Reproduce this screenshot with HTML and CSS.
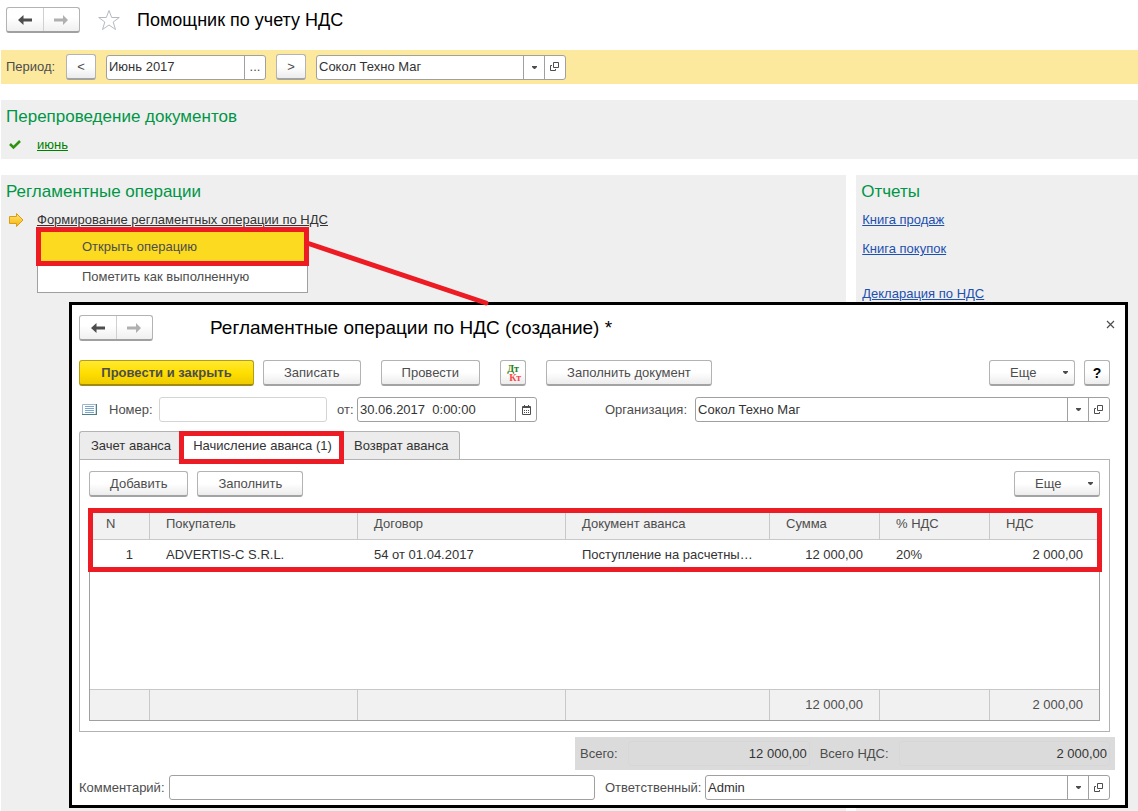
FILE: index.html
```html
<!DOCTYPE html>
<html lang="ru">
<head>
<meta charset="utf-8">
<meta name="viewport" content="width=device-width, initial-scale=1">
<title>Помощник по учету НДС</title>
<link rel="stylesheet" href="styles.css">
</head>
<body>
<svg class="defs" width="0" height="0" aria-hidden="true">
  <defs>
    <symbol id="back" viewBox="0 0 14 10"><path d="M0 5L5.500 0V3.500H14V6.500H5.500V10Z"/></symbol>
    <symbol id="forward" viewBox="0 0 14 10"><path d="M14 5L9 0V3.500H0V6.500H9V10Z"/></symbol>
    <symbol id="arrow" viewBox="0 0 5 3"><path d="M0 0H5V1L3 3H2L0 1Z"/></symbol>
    <symbol id="open" viewBox="0 0 10 10"><path d="M3.500 0.500H8.500V5.500H3.500ZM2 3.500H0.500V8.500H5.500V7" fill="none" stroke="currentColor"/></symbol>
  </defs>
</svg>
<div class="app">
  <header class="header">
    <div class="nav">
      <button type="button" aria-label="Назад"><svg class="nav-icon"><use href="#back"/></svg></button>
      <button type="button" aria-label="Вперед" class="nav-off"><svg class="nav-icon"><use href="#forward"/></svg></button>
    </div>
    <button type="button" class="star" aria-label="В избранное">
      <svg width="24" height="22" viewBox="0 0 24 22"><path d="M12 1.500L14.700 8.500H22.300L16.200 13L18.500 20.500L12 16L5.500 20.500L7.800 13L1.700 8.500H9.300Z" fill="#fff" stroke="#b5bac0"/></svg>
    </button>
    <h1 class="title">Помощник по учету НДС</h1>
  </header>

  <form class="period">
    <label class="period-label" for="period">Период:</label>
    <button type="button" class="btn btn-step">&lt;</button>
    <div class="field field-period">
      <input id="period" type="text" value="Июнь 2017">
      <button type="button" class="field-btn">...</button>
    </div>
    <button type="button" class="btn btn-step">&gt;</button>
    <div class="field field-firm">
      <div class="pick">
        <select aria-label="Организация"><option>Сокол Техно Маг</option></select>
        <span class="pick-arrow"><svg class="arrow"><use href="#arrow"/></svg></span>
      </div>
      <button type="button" class="field-btn" aria-label="Открыть"><svg class="open"><use href="#open"/></svg></button>
    </div>
  </form>

  <section class="panel panel-docs">
    <h2 class="heading">Перепроведение документов</h2>
    <div class="task">
      <svg width="12" height="10" viewBox="0 0 12 10"><path d="M1 4L4.500 7.500L11 1" fill="none" stroke="#2f9312" stroke-width="2.500"/></svg>
      <a class="link-green" href="#june">июнь</a>
    </div>
  </section>

  <div class="columns">
    <section class="panel">
      <h2 class="heading">Регламентные операции</h2>
      <div class="task">
        <svg width="15" height="14" viewBox="0 0 15 14"><defs><linearGradient id="gold" x2="0" y2="1"><stop stop-color="#ffe680"/><stop offset="1" stop-color="#f5b400"/></linearGradient></defs><path d="M0.500 3.500H7.500V0.500L14 7L7.500 13.500V10.500H0.500Z" fill="url(#gold)" stroke="#dc9d16"/></svg>
        <a class="link-dark" href="#operations">Формирование регламентных операции по НДС</a>
        <div class="menu">
          <button type="button" class="menu-item menu-active">Открыть операцию</button>
          <button type="button" class="menu-item">Пометить как выполненную</button>
        </div>
      </div>
    </section>
    <section class="panel">
      <h2 class="heading">Отчеты</h2>
      <nav class="reports">
        <a href="#sales">Книга продаж</a>
        <a href="#purchases">Книга покупок</a>
        <a class="report-apart" href="#declaration">Декларация по НДС</a>
      </nav>
    </section>
  </div>

  <section class="dialog" role="dialog" aria-labelledby="dialog-title">
    <div class="dialog-head">
      <div class="nav">
        <button type="button" aria-label="Назад"><svg class="nav-icon"><use href="#back"/></svg></button>
        <button type="button" aria-label="Вперед" class="nav-off"><svg class="nav-icon"><use href="#forward"/></svg></button>
      </div>
      <h2 class="title" id="dialog-title">Регламентные операции по НДС (создание) *</h2>
      <button type="button" class="close" aria-label="Закрыть"><svg width="9" height="9" viewBox="0 0 9 9"><path d="M1 1L8 8M8 1L1 8" stroke="#4d4d4d" stroke-width="1.200"/></svg></button>
    </div>

    <div class="toolbar">
      <button type="button" class="btn btn-main">Провести и закрыть</button>
      <button type="button" class="btn">Записать</button>
      <button type="button" class="btn btn-group">Провести</button>
      <button type="button" class="btn btn-group btn-square btn-entries" aria-label="Дт Кт"><span class="debit">Дт</span><span class="credit">Кт</span></button>
      <button type="button" class="btn btn-group">Заполнить документ</button>
      <button type="button" class="btn btn-more">Еще<svg class="arrow"><use href="#arrow"/></svg></button>
      <button type="button" class="btn btn-square btn-help">?</button>
    </div>

    <div class="row">
      <svg class="list-icon" width="15" height="11" viewBox="0 0 15 11"><path d="M0.500 0.500H14V10.500H0.500Z" fill="#fff" stroke="#9cb7c9"/><path d="M14.500 0V11M0 10.500H15" stroke="#4f7f7f"/><path d="M3 2.500H12M3 4.500H12M3 6.500H12M3 8.500H12" stroke="#7ba6cf"/></svg>
      <label class="number-label" for="number">Номер:</label>
      <div class="field field-number"><input id="number" type="text"></div>
      <label class="date-label" for="date">от:</label>
      <div class="field field-date">
        <input id="date" type="text" value="30.06.2017  0:00:00">
        <button type="button" class="field-btn" aria-label="Календарь"><svg width="9" height="10" viewBox="0 0 9 10"><path d="M0.500 1.500H8.500V9.500H0.500Z" fill="none" stroke="currentColor"/><path d="M0 2.500H9M2.500 0V2M6.500 0V2" stroke="currentColor"/><path d="M2 5.500H7M2 7.500H7" stroke="currentColor" stroke-dasharray="1 1"/></svg></button>
      </div>
      <label class="firm-label" for="firm">Организация:</label>
      <div class="field field-wide">
        <div class="pick">
          <select id="firm"><option>Сокол Техно Маг</option></select>
          <span class="pick-arrow"><svg class="arrow"><use href="#arrow"/></svg></span>
        </div>
        <button type="button" class="field-btn" aria-label="Открыть"><svg class="open"><use href="#open"/></svg></button>
      </div>
    </div>

    <div class="tabs" role="tablist">
      <button type="button" class="tab" role="tab">Зачет аванса</button>
      <button type="button" class="tab tab-active" role="tab" aria-selected="true">Начисление аванса (1)</button>
      <button type="button" class="tab" role="tab">Возврат аванса</button>
    </div>
    <div class="sheet">
      <div class="toolbar">
        <button type="button" class="btn">Добавить</button>
        <button type="button" class="btn">Заполнить</button>
        <button type="button" class="btn btn-more">Еще<svg class="arrow"><use href="#arrow"/></svg></button>
      </div>
      <div class="grid">
        <table>
          <colgroup><col class="col-n"><col class="col-text"><col class="col-text"><col><col class="col-num"><col class="col-num"><col class="col-num"></colgroup>
          <thead>
            <tr><th>N</th><th>Покупатель</th><th>Договор</th><th>Документ аванса</th><th>Сумма</th><th>% НДС</th><th>НДС</th></tr>
          </thead>
          <tbody>
            <tr><td class="num">1</td><td>ADVERTIS-C S.R.L.</td><td>54 от 01.04.2017</td><td>Поступление на расчетны…</td><td class="num">12 000,00</td><td>20%</td><td class="num">2 000,00</td></tr>
            <tr class="blank"><td colspan="7"></td></tr>
          </tbody>
          <tfoot>
            <tr><td></td><td></td><td></td><td></td><td class="num">12 000,00</td><td></td><td class="num">2 000,00</td></tr>
          </tfoot>
        </table>
      </div>
    </div>

    <div class="totals">
      <label for="total">Всего:</label>
      <input id="total" type="text" class="total" value="12 000,00" readonly>
      <label for="total-vat">Всего НДС:</label>
      <input id="total-vat" type="text" class="total total-vat" value="2 000,00" readonly>
    </div>

    <div class="row row-last">
      <label class="comment-label" for="comment">Комментарий:</label>
      <div class="field field-comment"><input id="comment" type="text"></div>
      <label class="author-label" for="author">Ответственный:</label>
      <div class="field field-wide">
        <div class="pick">
          <select id="author"><option>Admin</option></select>
          <span class="pick-arrow"><svg class="arrow"><use href="#arrow"/></svg></span>
        </div>
        <button type="button" class="field-btn" aria-label="Открыть"><svg class="open"><use href="#open"/></svg></button>
      </div>
    </div>
  </section>
  <svg class="pointer" width="190" height="70" viewBox="0 0 190 70" aria-hidden="true"><path d="M3 4L182 64" stroke="#ed1c24" stroke-width="5" stroke-linecap="round"/></svg>
</div>
</body>
</html>
```
FILE: styles.css
```css
*, *::after { box-sizing: border-box; }
body {
  margin: 0;
  background: #fff;
  color: #4d4d4d;
  font: 13px/16px "Liberation Sans", Arial, sans-serif;
}
button, input, select { font: inherit; color: inherit; margin: 0; padding: 0; border: 0; background: none; }
h1, h2 { margin: 0; font-weight: 400; }
svg { display: block; flex: none; }
.defs { position: absolute; }

.app { position: relative; min-height: 100vh; display: flex; flex-direction: column; padding-left: 1px; }
.header { display: flex; align-items: center; height: 50px; padding: 0 5px 10px; }
.title { color: #000; font-size: 18px; line-height: 24px; }

.nav {
  display: flex;
  width: 74px;
  height: 26px;
  border: 1px solid #b3b3b3;
  border-bottom: 2px solid #a0a0a0;
  border-radius: 3px;
  background: linear-gradient(#fff 40%, #f0f0f0);
}
.nav button { flex: 1; display: flex; align-items: center; justify-content: center; color: #4d4d4d; }
.nav .nav-off { border-left: 1px solid #d0d0d0; color: #b0b0b0; }
.nav-icon { width: 14px; height: 10px; fill: currentColor; }
.star { margin: 0 16px 0 17px; }

.btn {
  height: 26px;
  padding: 0 20px;
  border: 1px solid #b3b3b3;
  border-bottom: 2px solid #a3a3a3;
  border-radius: 3px;
  background: linear-gradient(#fff 50%, #ececec);
  white-space: nowrap;
}
.btn-step { width: 30px; padding: 0; }
.btn-main { min-width: 175px; border-color: #b59d14; border-bottom-color: #a08a10; background: linear-gradient(#ffe933, #ffdf00 50%, #efcb00); font-weight: 700; }
.btn-square { width: 26px; padding: 0; }
.btn-help { color: #000; font-weight: 700; font-size: 14px; }
.btn-more { display: flex; align-items: center; justify-content: space-between; width: 86px; padding-right: 6px; margin-left: auto; }
.btn-entries { display: flex; flex-direction: column; padding: 3px 4px; font: 700 10px/9px "Liberation Serif", serif; }
.debit { color: #2b7d0f; }
.credit { align-self: flex-end; color: #fb4848; }
.arrow { width: 5px; height: 3px; fill: #4d4d4d; }
.open { width: 10px; height: 10px; }

.field { display: flex; height: 25px; border: 1px solid #a0a0a0; border-radius: 3px; background: #fff; color: #333; }
.field input, .pick select { flex: 1; width: 100%; min-width: 0; padding: 0 2px; }
.pick { position: relative; flex: 1; display: flex; min-width: 0; }
.pick select { appearance: none; }
.pick-arrow { position: absolute; top: 0; right: 0; bottom: 0; display: flex; align-items: center; justify-content: center; width: 21px; border-left: 1px solid #a0a0a0; pointer-events: none; }
.field-btn { display: flex; align-items: center; justify-content: center; width: 21px; border-left: 1px solid #a0a0a0; color: #4d4d4d; }

.period { display: flex; align-items: center; gap: 10px; height: 34px; padding: 0 5px; background: #fce99e; }
.period-label { width: 50px; }
.field-period { width: 160px; }
.field-firm { width: 250px; }

.panel { padding: 5px; background: #efefef; }
.panel-docs { height: 59px; margin: 16px 0; }
.heading { color: #009646; font-size: 17px; line-height: 24px; }
.task { position: relative; display: grid; grid-template-columns: 31px 1fr; align-items: center; justify-items: start; padding-top: 8px; }
.task > svg { margin-left: 3px; }
.link-green { color: #008000; }
.link-dark { color: #333; }
.columns { flex: 1; display: grid; grid-template-columns: minmax(0, 3fr) minmax(0, 1fr); column-gap: 10px; }
.reports { display: grid; justify-items: start; gap: 13px; padding: 8px 1px; }
.reports a { color: #1d50b0; }
.report-apart { margin-top: 16px; }

.menu { position: absolute; top: 24px; left: 31px; width: 271px; border: 1px solid #a0a0a0; background: #fff; }
.menu-item { display: block; width: 100%; height: 28px; padding: 0 0 3px 44px; text-align: left; }
.menu-active { height: 35px; padding-bottom: 0; outline: 5px solid #ed1c24; outline-offset: -3px; background: #fbda20; }
.pointer { position: absolute; left: 304px; top: 239px; z-index: 3; pointer-events: none; fill: none; }

.dialog { position: absolute; z-index: 2; top: 302px; left: 69px; right: 10px; padding: 10px 15px 5px 7px; border: 3px solid #000; background: #fff; }
.dialog-head { display: flex; align-items: center; margin-bottom: 19px; }
.dialog-head .title { margin-left: 57px; font-size: 19px; }
.close { margin: 0 -5px 8px auto; }
.toolbar { display: flex; gap: 9px; }
.btn-group { margin-left: 11px; }
.row { display: flex; align-items: center; margin: 11px 0 9px; }
.list-icon { margin: 0 12px 0 3px; }
.number-label { width: 50px; }
.field-number { width: 168px; border-color: #d4d4d4; }
.date-label { width: 30px; padding-left: 10px; }
.field-date { width: 180px; white-space: pre; }
.firm-label { margin: 0 8px 0 68px; }
.field-wide { flex: 1; }

.tabs { display: flex; height: 29px; margin-bottom: -1px; }
.tab { position: relative; padding: 0 11px; border: 1px solid #b3b3b3; border-width: 1px 0 1px 1px; background: #ececec; color: #333; white-space: nowrap; }
.tab:first-child { width: 102px; border-top-left-radius: 3px; }
.tab:last-child { width: 117px; border-right-width: 1px; border-left: 0; border-top-right-radius: 3px; }
.tab-active { width: 162px; background: #fff; }
.tab-active::after { content: ""; position: absolute; z-index: 1; top: -1px; right: -1px; bottom: -5px; left: -3px; border: 5px solid #ed1c24; }

.sheet { padding: 11px 9px 10px; border: 1px solid #b3b3b3; }
.grid { position: relative; margin-top: 12px; border: 1px solid #a0a0a0; }
.grid::after { content: ""; position: absolute; top: -2px; left: -2px; right: -3px; height: 64px; border: 5px solid #ed1c24; pointer-events: none; }
table { width: 100%; table-layout: fixed; border-collapse: separate; border-spacing: 0; }
.col-n { width: 59px; }
.col-text { width: 208px; }
.col-num { width: 110px; }
th, td { padding: 0 16px; text-align: left; font-weight: 400; white-space: nowrap; }
th, tfoot td { border-left: 1px solid #c8c8c8; background: #f1f1f1; }
th { height: 30px; padding-bottom: 2px; border-bottom: 1px solid #c8c8c8; }
th:first-child, tfoot td:first-child { border-left: 0; }
tbody td { height: 29px; padding-left: 17px; color: #333; }
.blank td { height: 120px; }
tfoot td { height: 31px; border-top: 1px solid #c8c8c8; }
.num { text-align: right; }

.totals { display: flex; align-items: center; width: 540px; height: 33px; margin: 5px -5px 0 auto; padding: 0 5px; background: #dbdbdb; }
.total { width: 182px; height: 25px; margin: 0 10px; padding: 0 2px; border: 1px solid #d7d7d7; border-radius: 3px; color: #333; text-align: right; }
.total-vat { flex: 1; margin-right: 0; }
.row-last { margin: 5px 0 0; }
.comment-label { width: 90px; }
.field-comment { width: 426px; }
.author-label { width: 110px; padding-left: 10px; }
```
